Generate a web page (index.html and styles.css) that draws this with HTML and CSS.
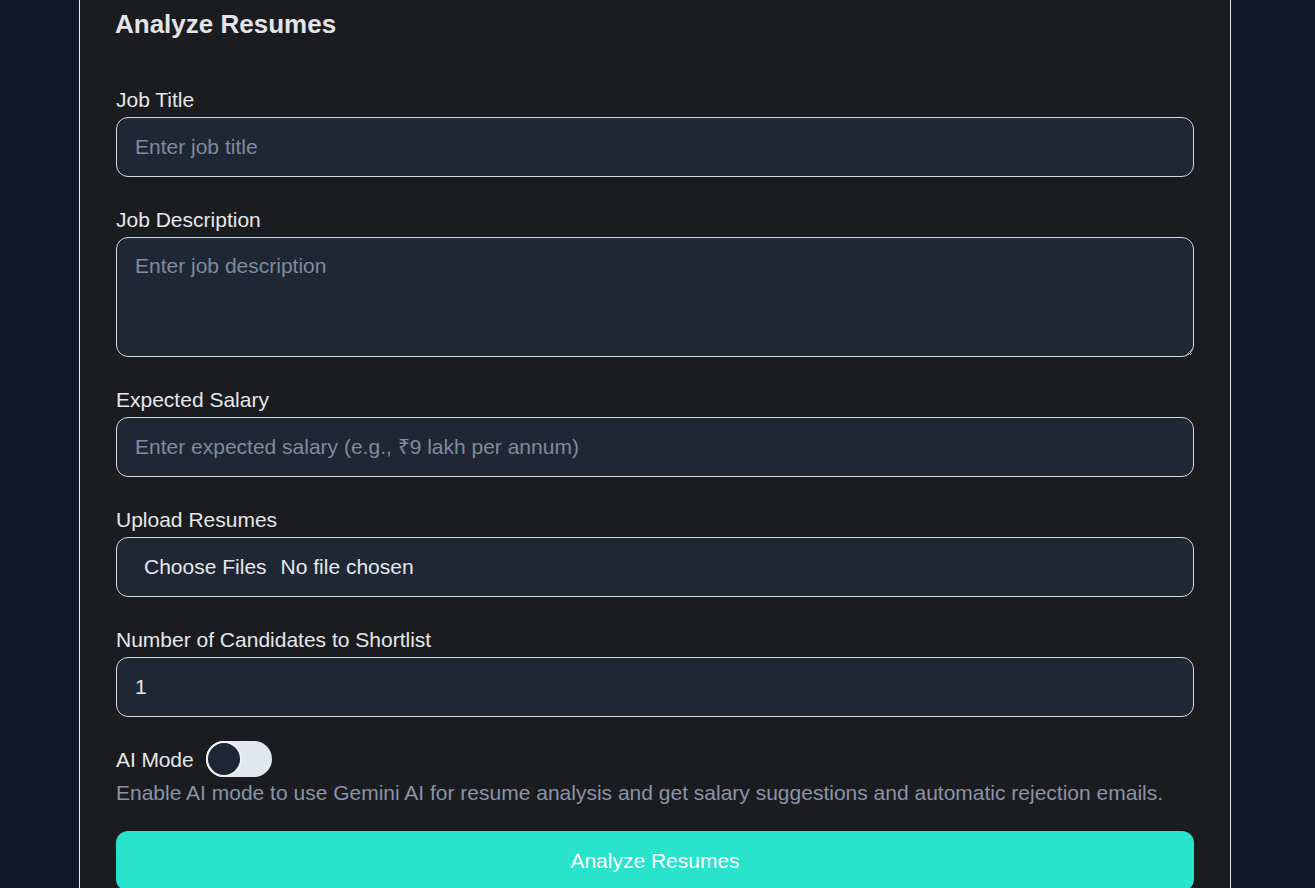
FILE: index.html
```html
<!DOCTYPE html>
<html lang="en">
<head>
<meta charset="utf-8">
<title>Analyze Resumes</title>
<link rel="stylesheet" href="styles.css">
</head>
<body>
<main class="panel">
  <h2 class="title">Analyze Resumes</h2>
  <form class="form">
    <div class="field">
      <label class="label" for="job-title">Job Title</label>
      <input class="control" id="job-title" type="text" placeholder="Enter job title">
    </div>
    <div class="field">
      <label class="label" for="job-desc">Job Description</label>
      <textarea class="control control-area" id="job-desc" placeholder="Enter job description"></textarea>
    </div>
    <div class="field">
      <label class="label" for="salary">Expected Salary</label>
      <input class="control" id="salary" type="text" placeholder="Enter expected salary (e.g., ₹9 lakh per annum)">
    </div>
    <div class="field">
      <label class="label" for="resumes">Upload Resumes</label>
      <input class="control control-file" id="resumes" type="file" multiple>
    </div>
    <div class="field">
      <label class="label" for="count">Number of Candidates to Shortlist</label>
      <input class="control" id="count" type="number" value="1" min="1">
    </div>
    <div class="ai-block">
      <div class="ai-row">
        <span class="ai-label">AI Mode</span>
        <span class="toggle"><span class="knob"></span></span>
      </div>
      <p class="hint">Enable AI mode to use Gemini AI for resume analysis and get salary suggestions and automatic rejection emails.</p>
    </div>
    <button class="submit" type="button">Analyze Resumes</button>
  </form>
</main>
</body>
</html>
```

FILE: styles.css
```css
* { box-sizing: border-box; }

html, body {
  margin: 0;
  padding: 0;
  background: #111827;
  height: 100%;
  overflow: hidden;
}

body {
  font-family: "Liberation Sans", Arial, sans-serif;
  color: #e5e7eb;
}

.panel {
  width: 1152px;
  margin-left: 79px;
  min-height: 900px;
  background: #1b1c1f;
  border: 1px solid #e5e7eb;
  border-top: 0;
  padding: 8px 36px 0 36px;
}

.title {
  margin: 0 0 47px -1px;
  font-size: 26px;
  line-height: 32px;
  font-weight: 700;
  color: #e2e4e9;
}

.form {
  display: flex;
  flex-direction: column;
}

.field {
  display: flex;
  flex-direction: column;
  margin-bottom: 30px;
}

.field:nth-child(5) { margin-bottom: 24px; }

.label {
  font-size: 21px;
  line-height: 25px;
  color: #e5e7eb;
  margin-bottom: 5px;
}

.control {
  width: 100%;
  height: 60px;
  background: #1f2735;
  border: 1px solid #d4d8de;
  border-radius: 12px;
  padding: 0 18px;
  font-family: "Liberation Sans", Arial, sans-serif;
  font-size: 21px;
  color: #e5e7eb;
  outline: none;
}

.control::placeholder { color: #7f8b9e; opacity: 1; }

.control-area {
  height: 120px;
  padding: 15px 18px;
  resize: vertical;
  line-height: 25px;
  display: block;
}

.control-file {
  padding: 0 18px 0 17px;
  line-height: 58px;
  color: #e5e7eb;
}

.control-file::file-selector-button {
  background: transparent;
  border: 0;
  color: #e5e7eb;
  font-family: inherit;
  font-size: 21px;
  padding: 0 10px;
  margin-right: 4px;
}

.ai-block {
  display: flex;
  flex-direction: column;
}

.ai-row {
  display: flex;
  align-items: center;
  gap: 12px;
}

.ai-label {
  font-size: 21px;
  line-height: 25px;
  color: #e5e7eb;
  letter-spacing: -0.1px;
}

.toggle {
  display: flex;
  align-items: center;
  width: 66px;
  height: 36px;
  border-radius: 18px;
  background: #e3e8ef;
}

.knob {
  width: 36px;
  height: 36px;
  border-radius: 50%;
  background: #1f2535;
  border: 2px solid #eef1f5;
}

.hint {
  margin: 3px 0 26px;
  font-size: 21px;
  line-height: 25px;
  color: #8a94a7;
}

.submit {
  width: 100%;
  height: 60px;
  background: #2ae3cc;
  border: 0;
  border-radius: 12px;
  color: #ffffff;
  font-family: "Liberation Sans", Arial, sans-serif;
  font-size: 21px;
  padding: 0;
  margin-bottom: 24px;
}
```
